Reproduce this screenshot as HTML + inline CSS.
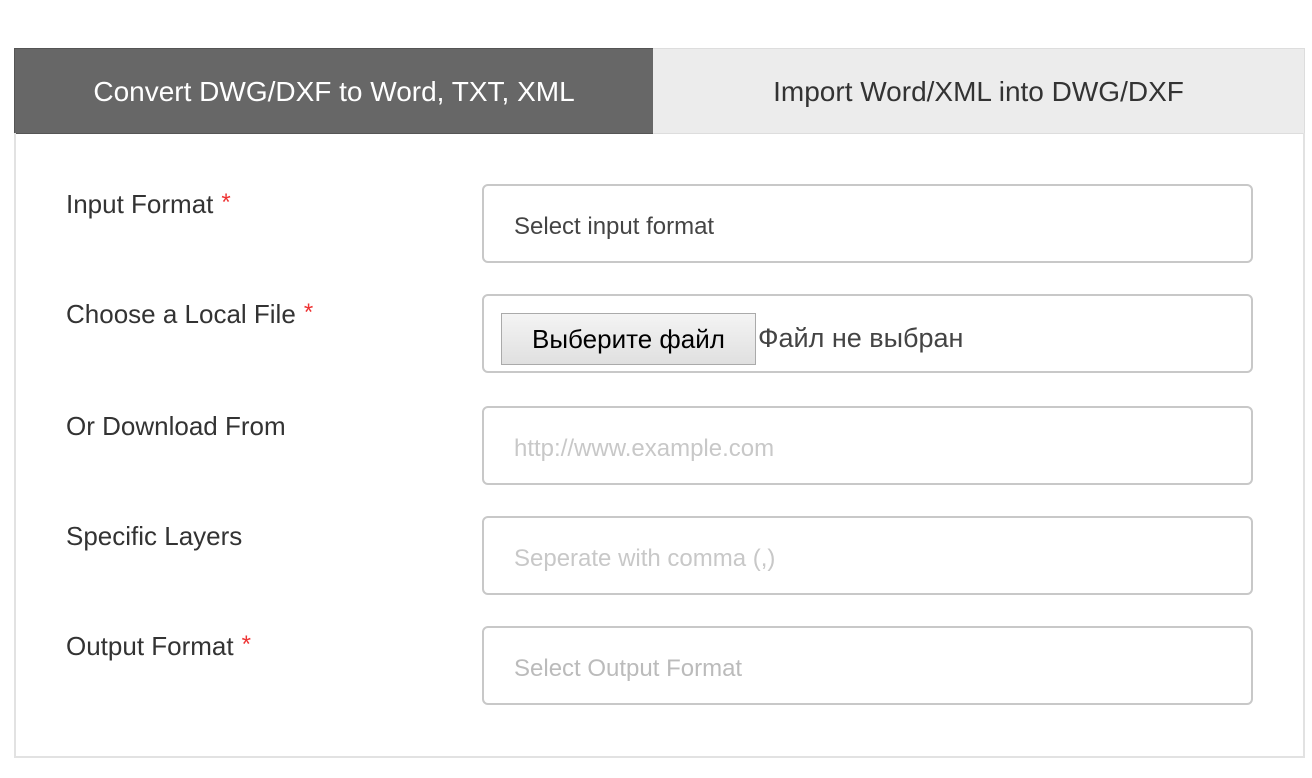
<!DOCTYPE html>
<html><head><meta charset="utf-8"><style>
*{box-sizing:border-box;margin:0;padding:0}
body{width:1312px;height:778px;background:#fff;font-family:"Liberation Sans",sans-serif;position:relative;overflow:hidden}
.tab{position:absolute;top:48px;height:86px;display:flex;align-items:center;justify-content:center;font-size:28px;padding-top:2px}
.t1{left:14px;width:640px;background:#676767;color:#fff;border:1px solid #555}
.t2{left:653px;width:652px;background:#ececec;color:#333;border:1px solid #ddd;border-left:none}
.panel{position:absolute;left:14px;top:133px;width:1291px;height:625px;border:2px solid #e2e2e2;border-top:none}
.lbl{position:absolute;left:66px;font-size:26px;color:#333}
.lbl b{color:#e33;font-weight:normal;font-size:24px;vertical-align:top;margin-left:8px}
.inp{position:absolute;left:482px;width:771px;height:79px;border:2px solid #c8c8c8;border-radius:6px;font-size:24px;padding-left:30px;padding-top:6px;display:flex;align-items:center;color:#444}
.ph{color:#c8c8c8}
.btn{position:absolute;left:17px;top:17px;width:255px;height:52px;background:linear-gradient(#f4f4f4,#e0e0e0);border:1px solid #aaa;font-size:26px;color:#000;display:flex;align-items:center;justify-content:center}
</style></head><body>
<div class="tab t1">Convert DWG/DXF to Word, TXT, XML</div>
<div class="tab t2">Import Word/XML into DWG/DXF</div>
<div class="panel"></div>
<div class="lbl" style="top:189px">Input Format<b>*</b></div>
<div class="inp" style="top:184px">Select input format</div>
<div class="lbl" style="top:299px">Choose a Local File<b>*</b></div>
<div class="inp" style="top:294px"><div class="btn">Выберите файл</div><span style="position:absolute;left:274px;top:27px;font-size:27px;color:#444">Файл не выбран</span></div>
<div class="lbl" style="top:411px">Or Download From</div>
<div class="inp ph" style="top:406px">http://www.example.com</div>
<div class="lbl" style="top:521px">Specific Layers</div>
<div class="inp ph" style="top:516px">Seperate with comma (,)</div>
<div class="lbl" style="top:631px">Output Format<b>*</b></div>
<div class="inp ph" style="top:626px;color:#bbb">Select Output Format</div>
</body></html>
